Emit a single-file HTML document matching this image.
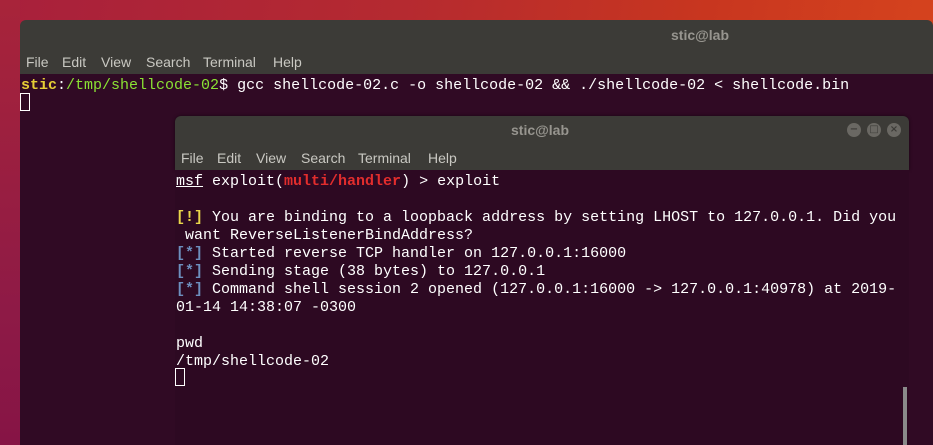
<!DOCTYPE html>
<html><head><meta charset="utf-8"><style>
*{margin:0;padding:0;box-sizing:border-box}
body{width:933px;height:445px;overflow:hidden;position:relative;background:linear-gradient(100deg,#a8203c 0%,#b52a30 40%,#c8361f 70%,#d9471e 100%)}
.left{position:absolute;left:0;top:0;width:20px;height:445px;background:linear-gradient(180deg,#a8243a,#8e1a46 70%,#861445)}
.win{position:absolute;background:#3c3b37;border-radius:6px 6px 0 0}
.term{position:absolute;background:#2f0a24}
.menu{position:absolute;font:14px "Liberation Sans",sans-serif;color:#c9c8c2}
.menu span{position:absolute;white-space:nowrap}
.title{position:absolute;font:bold 14px "Liberation Sans",sans-serif;color:#97958f;white-space:nowrap}
.t{position:absolute;font:15px "Liberation Mono",monospace;color:#fff;white-space:pre;line-height:18px}
.y{color:#e6cf35;font-weight:bold}.g{color:#8ae234}.r{color:#e22d2d;font-weight:bold}.yy{color:#e9d64a;font-weight:bold}.b{color:#6d8fbe;font-weight:bold}
.cur{position:absolute;width:10px;height:18px;border:1.5px solid #fff}
.btn{position:absolute;width:14px;height:14px;border-radius:50%;background:#6a6863;top:123px;color:#3c3b37;font:bold 10px/14px "DejaVu Sans",sans-serif;text-align:center}
</style></head><body>
<div class="left"></div>
<div class="win" style="left:20px;top:20px;width:913px;height:54px"></div>
<div class="title" style="left:671px;top:27px">stic@lab</div>
<div class="menu" style="left:0;top:54px">
<span style="left:26px">File</span><span style="left:62px">Edit</span><span style="left:101px">View</span><span style="left:146px">Search</span><span style="left:203px">Terminal</span><span style="left:273px">Help</span></div>
<div class="term" style="left:20px;top:74px;width:913px;height:371px;background:#300a24"></div>
<div class="t" style="left:21px;top:77px"><span class="y">stic</span>:<span class="g">/tmp/shellcode-02</span>$ gcc shellcode-02.c -o shellcode-02 &amp;&amp; ./shellcode-02 &lt; shellcode.bin</div>
<div class="cur" style="left:20px;top:93px"></div>

<div class="win" style="left:175px;top:116px;width:734px;height:54px;box-shadow:0 0 3px rgba(0,0,0,.5)"></div>
<div class="title" style="left:511px;top:122px">stic@lab</div>
<div class="btn" style="left:847px">−</div><div class="btn" style="left:867px">□</div><div class="btn" style="left:887px">×</div>
<div class="menu" style="left:0;top:150px">
<span style="left:181px">File</span><span style="left:217px">Edit</span><span style="left:256px">View</span><span style="left:301px">Search</span><span style="left:358px">Terminal</span><span style="left:428px">Help</span></div>
<div class="term" style="left:175px;top:170px;width:734px;height:275px;background:#2d0922"></div>
<div style="position:absolute;left:903px;top:387px;width:4px;height:58px;background:#8a8a8a"></div>
<div class="t" style="left:176px;top:173px"><span style="text-decoration:underline">msf</span> exploit(<span class="r">multi/handler</span>) &gt; exploit

<span class="yy">[!]</span> You are binding to a loopback address by setting LHOST to 127.0.0.1. Did you
 want ReverseListenerBindAddress?
<span class="b">[*]</span> Started reverse TCP handler on 127.0.0.1:16000
<span class="b">[*]</span> Sending stage (38 bytes) to 127.0.0.1
<span class="b">[*]</span> Command shell session 2 opened (127.0.0.1:16000 -&gt; 127.0.0.1:40978) at 2019-
01-14 14:38:07 -0300

pwd
/tmp/shellcode-02</div>
<div class="cur" style="left:175px;top:368px"></div>
</body></html>
